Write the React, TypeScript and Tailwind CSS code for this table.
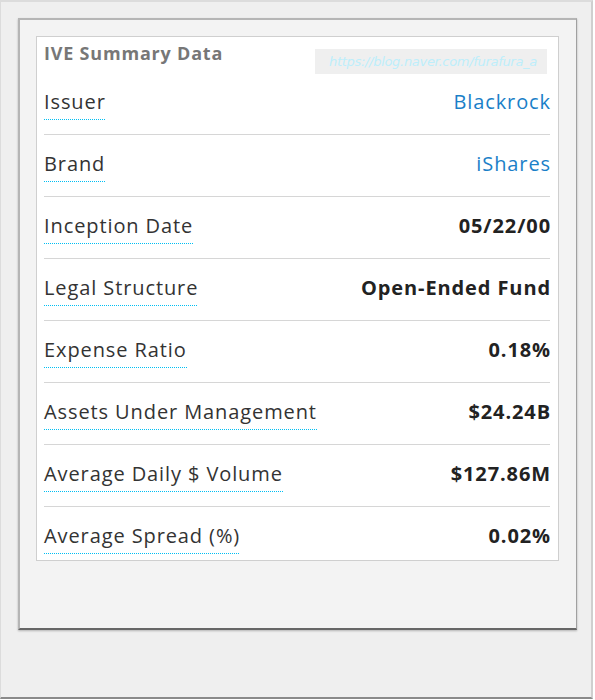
const rows: { label: string; value: string; link?: boolean }[] = [
  { label: "Issuer", value: "Blackrock", link: true },
  { label: "Brand", value: "iShares", link: true },
  { label: "Inception Date", value: "05/22/00" },
  { label: "Legal Structure", value: "Open-Ended Fund" },
  { label: "Expense Ratio", value: "0.18%" },
  { label: "Assets Under Management", value: "$24.24B" },
  { label: "Average Daily $ Volume", value: "$127.86M" },
  { label: "Average Spread (%)", value: "0.02%" },
];

export default function App() {
  return (
    <div className="w-[595px] h-[700px] bg-white font-['Open_Sans',sans-serif]">
      {/* outer paper frame */}
      <div className="w-[593px] h-[699px] bg-[#efefef] border-t-2 border-l border-[#dcdcdc] border-r-2 border-b-2 border-r-[#cfcfcf] border-b-[#8a8a8a] pt-[16px] pl-[17px]">
        {/* inner frame */}
        <div className="w-[559px] h-[612px] bg-[#f3f3f3] border-t-2 border-l-2 border-[#b5b5b5] border-r border-r-[#a0a0a0] border-b-2 border-b-[#666] pt-[16px] pl-[16px] shadow-[0_1px_2px_rgba(0,0,0,0.25)]">
          {/* card */}
          <div className="w-[523px] bg-white border border-[#cfcfcf] pl-[7px] pr-[8px] pb-[6px]">
            <div className="h-[36px] flex justify-between items-start">
              <h2 className="mt-[6px] leading-[20px] text-[18px] font-bold text-[#777] tracking-[0.8px]">
                IVE Summary Data
              </h2>
              <div className="mt-[12px] mr-[3px] w-[232px] h-[25px] bg-[#efefef] flex items-center pl-[14px] text-[13px] italic text-[#bdeefb] font-['DejaVu_Sans',sans-serif] tracking-[-0.3px]">
                https://blog.naver.com/furafura_a
              </div>
            </div>
            {rows.map((r, i) => (
              <div
                key={r.label}
                className={`flex justify-between items-start pt-[17px] ${
                  i < rows.length - 1 ? "h-[62px] border-b border-[#d6d6d6]" : "h-[47px]"
                }`}
              >
                <div className="flex flex-col">
                  <span className="leading-[24px] text-[20px] tracking-[0.9px] text-[#333]">
                    {r.label}
                  </span>
                  {/* dotted underline, 1px on / 1px off */}
                  <div className="h-px mt-[5px] bg-[repeating-linear-gradient(90deg,#00bff3_0px,#00bff3_1px,#ffffff_1px,#ffffff_2px)]" />
                </div>
                <span
                  className={`leading-[24px] text-[20px] tracking-[0.9px] -mr-[1px] ${
                    r.link ? "text-[#1a80c8]" : "font-bold text-[#222]"
                  }`}
                >
                  {r.value}
                </span>
              </div>
            ))}
          </div>
        </div>
      </div>
    </div>
  );
}
